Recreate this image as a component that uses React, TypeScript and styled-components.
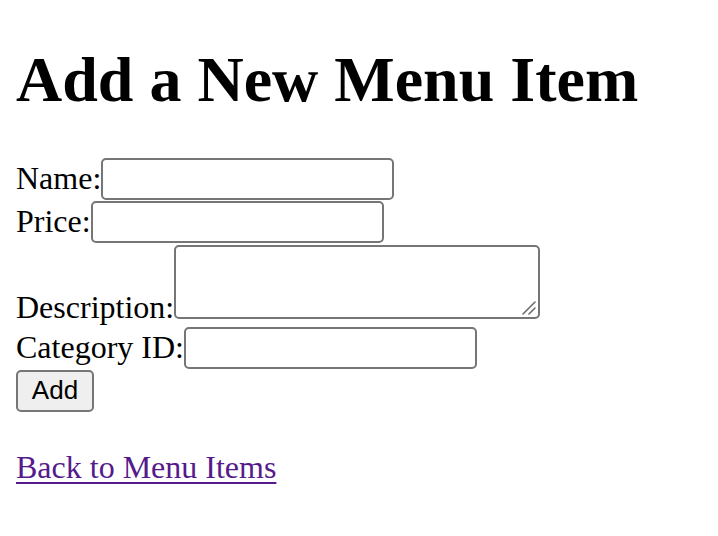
import React from "react"
import styled, { createGlobalStyle } from "styled-components"

const GlobalStyle = createGlobalStyle`
  html, body {
    margin: 0;
    background: #ffffff;
  }
  body {
    padding: 16px;
    font-family: "Liberation Serif", "Times New Roman", serif;
    font-size: 32px;
    color: #000000;
  }
`

const Title = styled.h1`
  font-size: 64px;
  font-weight: bold;
  line-height: 74px;
  margin: 27px 0 41px;
`

const Form = styled.form`
  display: flex;
  flex-direction: column;
  align-items: flex-start;
`

const Row = styled.div<{ $top: number }>`
  display: flex;
  align-items: flex-end;
  margin-top: ${props => props.$top}px;
`

const Label = styled.label<{ $lift: number }>`
  line-height: 32px;
  margin-bottom: ${props => props.$lift}px;
`

const Field = styled.input<{ $width: number }>`
  box-sizing: border-box;
  width: ${props => props.$width}px;
  height: 42px;
  border: 2px solid #767676;
  border-radius: 5px;
  background: #ffffff;
  font-family: "Liberation Sans", Arial, sans-serif;
  font-size: 26px;
  padding: 2px 6px;
  outline: none;
`

const AreaWrap = styled.span`
  position: relative;
  display: block;
`

const Area = styled.textarea`
  box-sizing: border-box;
  width: 366px;
  height: 74px;
  border: 2px solid #767676;
  border-radius: 5px;
  background: #ffffff;
  font-family: "Liberation Mono", monospace;
  font-size: 26px;
  padding: 4px;
  outline: none;
  resize: none;
  display: block;
`

const Grip = styled.svg`
  position: absolute;
  right: 4px;
  bottom: 4px;
  width: 16px;
  height: 16px;
  pointer-events: none;
`

const Button = styled.button`
  box-sizing: border-box;
  width: 78px;
  height: 42px;
  margin-top: 1px;
  border: 2px solid #767676;
  border-radius: 5px;
  background: #efefef;
  color: #000000;
  font-family: "Liberation Sans", Arial, sans-serif;
  font-size: 26px;
  padding: 0 0 1px;
`

const Footer = styled.p`
  margin: 37px 0 0;
  line-height: 37px;
`

const BackLink = styled.a`
  color: #551a8b;
  text-decoration: underline;
  text-decoration-thickness: 2px;
  text-underline-offset: 4px;
`

export default function App() {
  return (
    <>
      <GlobalStyle />
      <Title>Add a New Menu Item</Title>
      <Form onSubmit={e => e.preventDefault()}>
        <Row $top={0}>
          <Label $lift={6}>Name:</Label>
          <Field $width={293} />
        </Row>
        <Row $top={1}>
          <Label $lift={6}>Price:</Label>
          <Field $width={293} />
        </Row>
        <Row $top={2}>
          <Label $lift={-4}>Description:</Label>
          <AreaWrap>
            <Area />
            <Grip viewBox="0 0 16 16">
              <path
                d="M15 3 L3 15 M15 9 L9 15"
                stroke="#6e6e6e"
                strokeWidth="1.6"
                strokeLinecap="round"
                fill="none"
              />
            </Grip>
          </AreaWrap>
        </Row>
        <Row $top={8}>
          <Label $lift={6}>Category ID:</Label>
          <Field $width={293} />
        </Row>
        <Button type="submit">Add</Button>
      </Form>
      <Footer>
        <BackLink href="#">Back to Menu Items</BackLink>
      </Footer>
    </>
  )
}
